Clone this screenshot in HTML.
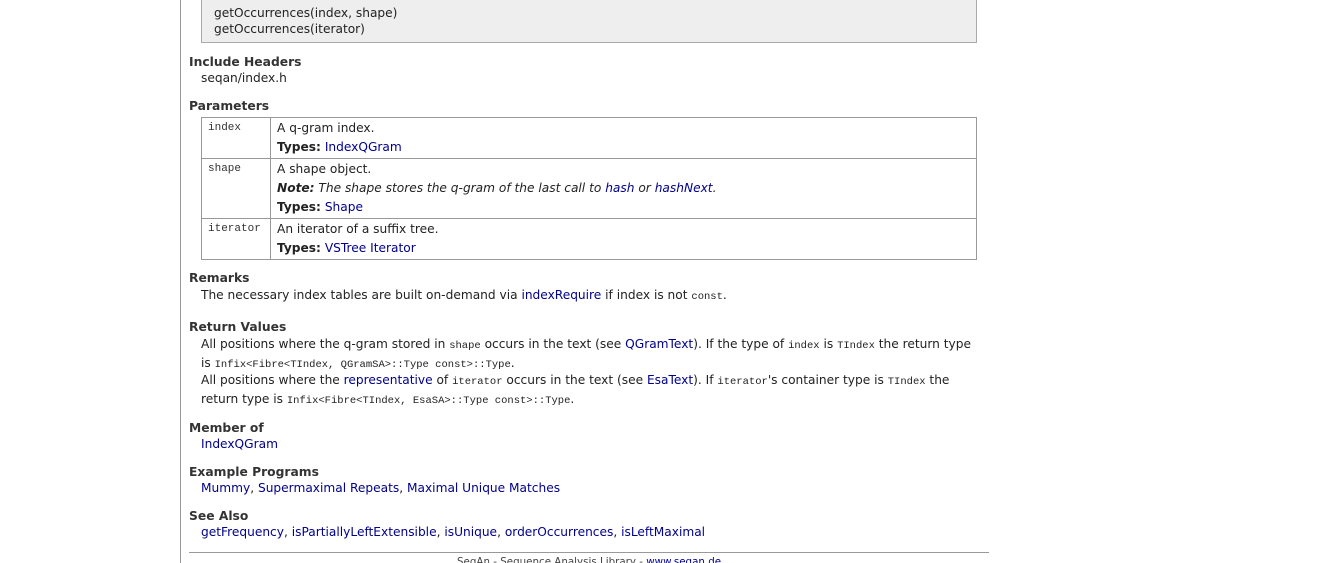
<!DOCTYPE html>
<html><head><meta charset="utf-8"><style>
html,body{margin:0;padding:0;background:#fff;width:1318px;height:563px;overflow:hidden;position:relative}
body{font-family:"DejaVu Sans","Liberation Sans",sans-serif;font-size:12.2px;color:#222}
.a{position:absolute;white-space:nowrap}
a{color:#00008b;text-decoration:none}
.h{font-weight:bold;font-size:12.3px;color:#333;left:189px}
.t{left:201px}
code,.m{font-family:"Liberation Mono","DejaVu Sans Mono",monospace;font-size:10.5px}
.vl{position:absolute;left:180px;top:0;width:1px;height:563px;background:#999}
table{position:absolute;left:201px;top:117px;width:776px;border-collapse:collapse}
td{border:1px solid #999;padding:1px 6px 0;vertical-align:top;line-height:19px}
td.k{width:56px;font-family:"Liberation Mono",monospace;font-size:11px;color:#333}
</style></head><body>
<div class="vl"></div>
<div class="a" style="left:201px;top:-1px;width:774px;height:43px;background:#eee;border:1px solid #aaa;border-top:none"></div>
<div class="a" style="left:214px;top:5px;line-height:16px">getOccurrences(index, shape)<br>getOccurrences(iterator)</div>
<div class="a h" style="top:55px">Include Headers</div>
<div class="a t" style="top:71px">seqan/index.h</div>
<div class="a h" style="top:99px">Parameters</div>
<table>
<tr style="height:41px"><td class="k">index</td><td>A q-gram index.<br><b>Types:</b> <a>IndexQGram</a></td></tr>
<tr style="height:60px"><td class="k">shape</td><td>A shape object.<br><i><b>Note:</b> The shape stores the q-gram of the last call to <a>hash</a> or <a>hashNext</a>.</i><br><b>Types:</b> <a>Shape</a></td></tr>
<tr style="height:41px"><td class="k">iterator</td><td>An iterator of a suffix tree.<br><b>Types:</b> <a>VSTree Iterator</a></td></tr>
</table>
<div class="a h" style="top:271px">Remarks</div>
<div class="a t" style="top:288px">The necessary index tables are built on-demand via <a>indexRequire</a> if index is not <code>const</code>.</div>
<div class="a h" style="top:320px">Return Values</div>
<div class="a t" style="top:336px;line-height:17px">All positions where the q-gram stored in <code>shape</code> occurs in the text (see <a>QGramText</a>). If the type of <code>index</code> is <code>TIndex</code> the return type<br>is <code>Infix&lt;Fibre&lt;TIndex, QGramSA&gt;::Type const&gt;::Type</code>.</div>
<div class="a t" style="top:372px;line-height:17px">All positions where the <a>representative</a> of <code>iterator</code> occurs in the text (see <a>EsaText</a>). If <code>iterator</code>'s container type is <code>TIndex</code> the<br>return type is <code>Infix&lt;Fibre&lt;TIndex, EsaSA&gt;::Type const&gt;::Type</code>.</div>
<div class="a h" style="top:421px">Member of</div>
<div class="a t" style="top:437px"><a>IndexQGram</a></div>
<div class="a h" style="top:465px">Example Programs</div>
<div class="a t" style="top:481px"><a>Mummy</a>, <a>Supermaximal Repeats</a>, <a>Maximal Unique Matches</a></div>
<div class="a h" style="top:509px">See Also</div>
<div class="a t" style="top:525px"><a>getFrequency</a>, <a>isPartiallyLeftExtensible</a>, <a>isUnique</a>, <a>orderOccurrences</a>, <a>isLeftMaximal</a></div>
<div class="a" style="left:189px;top:552px;width:800px;height:1px;background:#999"></div>
<div class="a" style="left:457px;top:556px;font-size:10.3px;color:#444">SeqAn - Sequence Analysis Library - <a>www.seqan.de</a></div>
</body></html>
